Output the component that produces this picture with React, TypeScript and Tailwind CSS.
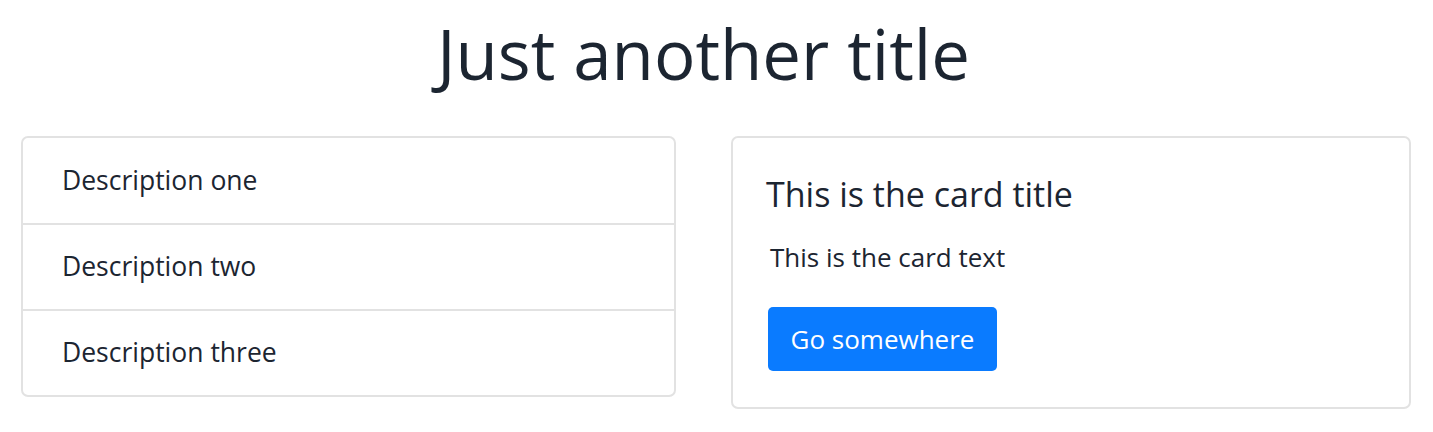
const items = ["Description one", "Description two", "Description three"];
const rowHeights = ["h-[85px]", "h-[86px] border-t-2", "h-[86px] border-t-2"];

export default function App() {
  return (
    <div
      className="min-h-screen bg-white text-[#1c2531] px-[21px]"
      style={{ fontFamily: '"Open Sans", sans-serif' }}
    >
      {/* Heading */}
      <h1 className="pt-[6px] text-center text-[69px] leading-[94px] pr-[26px]">
        Just another title
      </h1>

      <div className="mt-[36px] flex items-start gap-[55px]">
        {/* List group */}
        <ul className="w-[655px] rounded-[7px] border-2 border-[#e2e2e2]">
          {items.map((item, i) => (
            <li
              key={item}
              className={`${rowHeights[i]} flex items-center pl-[39px] text-[26.5px] border-[#e2e2e2]`}
            >
              {item}
            </li>
          ))}
        </ul>

        {/* Card */}
        <div className="w-[680px] h-[273px] rounded-[7px] border-2 border-[#e2e2e2] pl-[33px] pt-[33px]">
          <h5 className="text-[34px] leading-[46px]">This is the card title</h5>
          <p className="mt-[23px] pl-[4px] text-[26px] leading-[35px]">This is the card text</p>
          <button className="mt-[32px] ml-[2px] h-[64px] w-[229px] rounded-[5px] bg-[#0a7bff] text-white text-[26px]">
            Go somewhere
          </button>
        </div>
      </div>
    </div>
  );
}
